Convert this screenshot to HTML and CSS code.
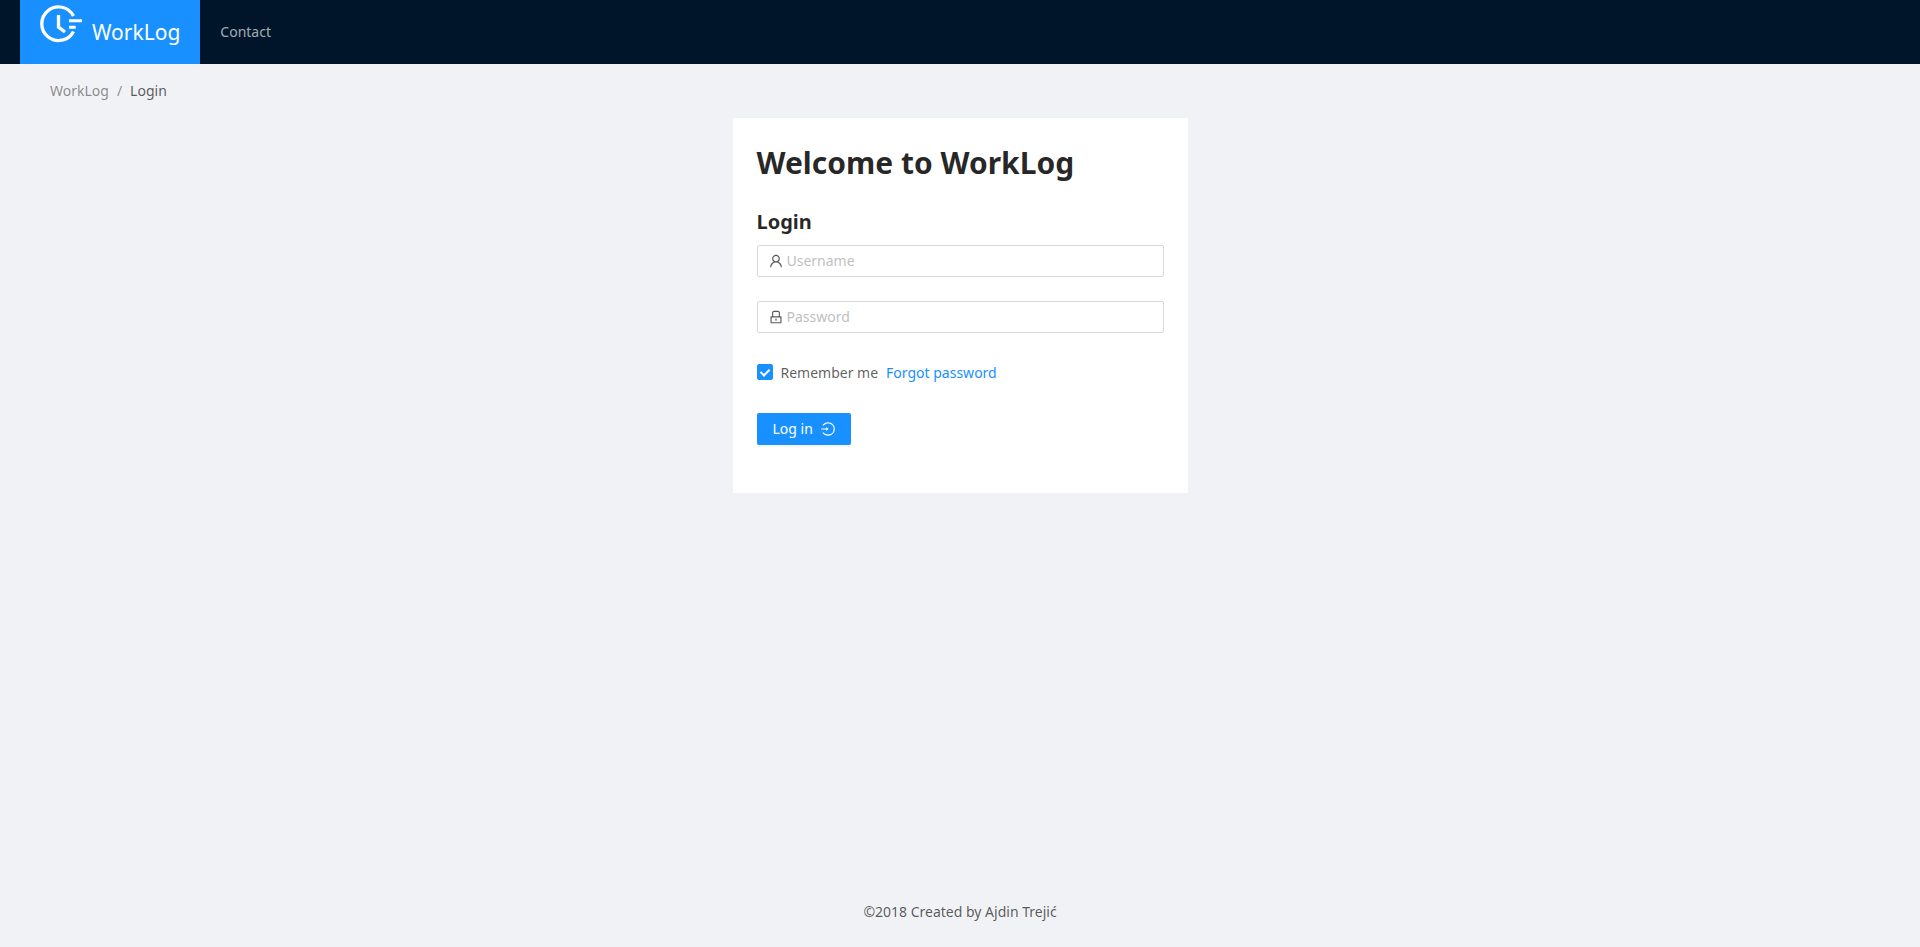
FILE: index.html
```html
<!DOCTYPE html>
<html lang="en">
<head>
<meta charset="utf-8">
<meta name="viewport" content="width=device-width, initial-scale=1">
<title>WorkLog</title>
<link rel="stylesheet" href="styles.css">
</head>
<body>
<header class="header">
  <nav class="menu" aria-label="Main">
    <a class="menu-item brand" href="#">
      <svg class="brand-icon" viewBox="0 0 42 38" aria-hidden="true" fill="none" stroke="currentColor" stroke-width="3.300">
        <path d="M33.500 11A16.800 16.800 0 1 0 33.500 26.400"/>
        <path d="M18.500 10v12.200l6.500 4.800"/>
        <path d="M29 15.700H42M29 22.300h6.700" stroke-width="3"/>
      </svg>
      <span>WorkLog</span>
    </a>
    <a class="menu-item" href="#">Contact</a>
  </nav>
</header>
<main class="content">
  <nav class="breadcrumb" aria-label="Breadcrumb">
    <a class="breadcrumb-link" href="#">WorkLog</a>
    <span class="breadcrumb-separator">/</span>
    <span>Login</span>
  </nav>
  <section class="card">
    <h1 class="title">Welcome to WorkLog</h1>
    <h2 class="subtitle">Login</h2>
    <form class="form">
      <label class="field">
        <svg class="icon" viewBox="64 64 896 896" aria-hidden="true" fill="currentColor"><path d="M858.500 763.600a374 374 0 0 0-80.600-119.500 375.630 375.630 0 0 0-119.500-80.600c-.4-.2-.8-.3-1.200-.5C719.500 518 760 444.700 760 362c0-137-111-248-248-248S264 225 264 362c0 82.700 40.500 156 102.800 201.100-.4.200-.8.300-1.200.5-44.800 18.900-85 46-119.500 80.600a375.630 375.630 0 0 0-80.600 119.500A371.700 371.700 0 0 0 136 901.800a8 8 0 0 0 8 8.200h60c4.400 0 7.900-3.500 8-7.800 2-77.200 33-149.500 87.800-204.300 56.700-56.700 132-87.900 212.200-87.900s155.500 31.200 212.200 87.900C779 752.700 810 825 812 902.200c.1 4.400 3.600 7.800 8 7.800h60a8 8 0 0 0 8-8.200c-1-47.800-10.900-94.300-29.500-138.200zM512 534c-45.900 0-89.100-17.900-121.600-50.400S340 407.900 340 362c0-45.900 17.900-89.100 50.400-121.600S466.100 190 512 190s89.100 17.900 121.600 50.400S684 316.100 684 362c0 45.900-17.900 89.100-50.400 121.600S557.900 534 512 534z"/></svg>
        <input class="input" type="text" placeholder="Username" aria-label="Username">
      </label>
      <label class="field">
        <svg class="icon" viewBox="64 64 896 896" aria-hidden="true" fill="currentColor"><path d="M832 464h-68V240c0-70.700-57.300-128-128-128H388c-70.700 0-128 57.300-128 128v224h-68c-17.700 0-32 14.300-32 32v384c0 17.700 14.300 32 32 32h640c17.700 0 32-14.300 32-32V496c0-17.700-14.300-32-32-32zM332 240c0-30.900 25.100-56 56-56h248c30.900 0 56 25.100 56 56v224H332V240zm460 600H232V536h560v304zM484 701v53c0 4.400 3.600 8 8 8h40c4.400 0 8-3.600 8-8v-53a48.010 48.010 0 1 0-56 0z"/></svg>
        <input class="input" type="password" placeholder="Password" aria-label="Password">
      </label>
      <div class="options">
        <label class="remember"><input class="checkbox" type="checkbox" checked>Remember me</label>
        <a class="forgot" href="#">Forgot password</a>
      </div>
      <button class="button" type="button">
        <span>Log in</span>
        <svg class="icon" viewBox="64 64 896 896" aria-hidden="true" fill="currentColor"><path d="M521.700 82c-152.500-.4-286.700 78.500-363.400 197.700-3.400 5.300.4 12.300 6.700 12.300h70.300c4.800 0 9.300-2.100 12.300-5.800 7-8.500 14.500-16.700 22.400-24.500 32.600-32.500 70.500-58.100 112.700-75.900 43.600-18.400 90-27.800 137.900-27.800 47.900 0 94.300 9.300 137.900 27.800 42.200 17.800 80.100 43.400 112.700 75.900 32.600 32.500 58.100 70.400 76 112.500C865.700 417.800 875 464.100 875 512c0 47.900-9.400 94.200-27.800 137.800-17.800 42.100-43.400 80-76 112.500s-70.500 58.100-112.700 75.900A352.800 352.800 0 0 1 520.600 866c-47.900 0-94.300-9.400-137.900-27.800A353.840 353.840 0 0 1 270 762.300c-7.900-7.900-15.300-16.100-22.400-24.500-3-3.700-7.600-5.800-12.300-5.800H165c-6.300 0-10.200 7-6.700 12.300C234.900 863.200 368.500 942 520.600 942c236.200 0 428-190.100 430.400-425.600C953.400 277.100 761.300 82.600 521.700 82zM395.020 624v-76h-314c-4.400 0-8-3.600-8-8v-56c0-4.400 3.600-8 8-8h314v-76c0-6.700 7.800-10.500 13-6.300l141.900 112a8 8 0 0 1 0 12.600l-141.900 112c-5.200 4.100-13 .4-13-6.300z"/></svg>
      </button>
    </form>
  </section>
</main>
<footer class="footer">©2018 Created by Ajdin Trejić</footer>
</body>
</html>
```
FILE: styles.css
```css
*,
*::after {
  box-sizing: border-box;
}

body {
  margin: 0;
  min-height: 100vh;
  display: flex;
  flex-direction: column;
  background: #f0f2f5;
  color: rgba(0, 0, 0, 0.65);
  font: 14px/22px "Noto Sans", sans-serif;
}

a {
  text-decoration: none;
}

.header {
  padding: 0 20px;
  background: #001529;
}

.menu {
  display: flex;
  height: 64px;
}

.menu-item {
  display: flex;
  align-items: center;
  padding: 0 20px;
  color: rgba(255, 255, 255, 0.65);
}

.brand {
  gap: 10px;
  background: #1890ff;
  color: #fff;
  font-size: 21px;
}

.brand-icon {
  width: 42px;
  height: 38px;
  align-self: flex-start;
  margin-top: 5px;
}

.content {
  flex: 1;
  padding: 16px 50px;
}

.breadcrumb {
  display: flex;
  gap: 8px;
  margin-bottom: 16px;
}

.breadcrumb-link,
.breadcrumb-separator {
  color: rgba(0, 0, 0, 0.45);
}

.card {
  width: 25%;
  min-width: 320px;
  margin: 0 auto;
  padding: 24px 24px 48px;
  background: #fff;
}

.title,
.subtitle {
  margin: 0;
  color: rgba(0, 0, 0, 0.85);
  font-weight: 700;
}

.title {
  margin-bottom: 24px;
  font-size: 30px;
  line-height: 42px;
}

.subtitle {
  margin-bottom: 9px;
  font-size: 20px;
  line-height: 28px;
}

.form {
  display: flex;
  flex-direction: column;
  align-items: flex-start;
  gap: 24px;
}

.field {
  display: flex;
  align-items: center;
  gap: 4px;
  width: 100%;
  height: 32px;
  padding: 0 11px;
  border: 1px solid #d9d9d9;
  border-radius: 2px;
}

.field:focus-within {
  border-color: #40a9ff;
}

.icon {
  flex: none;
  width: 14px;
  height: 14px;
}

.input {
  flex: 1;
  min-width: 0;
  padding: 0;
  border: 0;
  outline: 0;
  background: transparent;
  color: inherit;
  font: inherit;
}

.input::placeholder {
  color: #bfbfbf;
}

.options {
  display: flex;
  align-items: center;
  gap: 8px;
  height: 32px;
}

.remember {
  display: flex;
  align-items: center;
  gap: 8px;
}

.checkbox {
  display: grid;
  place-items: center;
  appearance: none;
  width: 16px;
  height: 16px;
  margin: 0 0 2px;
  border: 1px solid #d9d9d9;
  border-radius: 2px;
}

.checkbox:checked {
  border-color: #1890ff;
  background: #1890ff;
}

.checkbox:checked::after {
  content: "";
  width: 6px;
  height: 9px;
  margin-bottom: 2px;
  border: solid #fff;
  border-width: 0 2px 2px 0;
  transform: rotate(45deg);
}

.forgot {
  color: #1890ff;
}

.button {
  display: flex;
  align-items: center;
  gap: 8px;
  height: 32px;
  padding: 0 16px;
  border: 0;
  border-radius: 2px;
  background: #1890ff;
  box-shadow: 0 2px 0 rgba(0, 0, 0, 0.04);
  color: #fff;
  font: inherit;
}

.button .icon {
  margin-bottom: 1px;
}

.footer {
  padding: 24px 50px;
  text-align: center;
}
```
